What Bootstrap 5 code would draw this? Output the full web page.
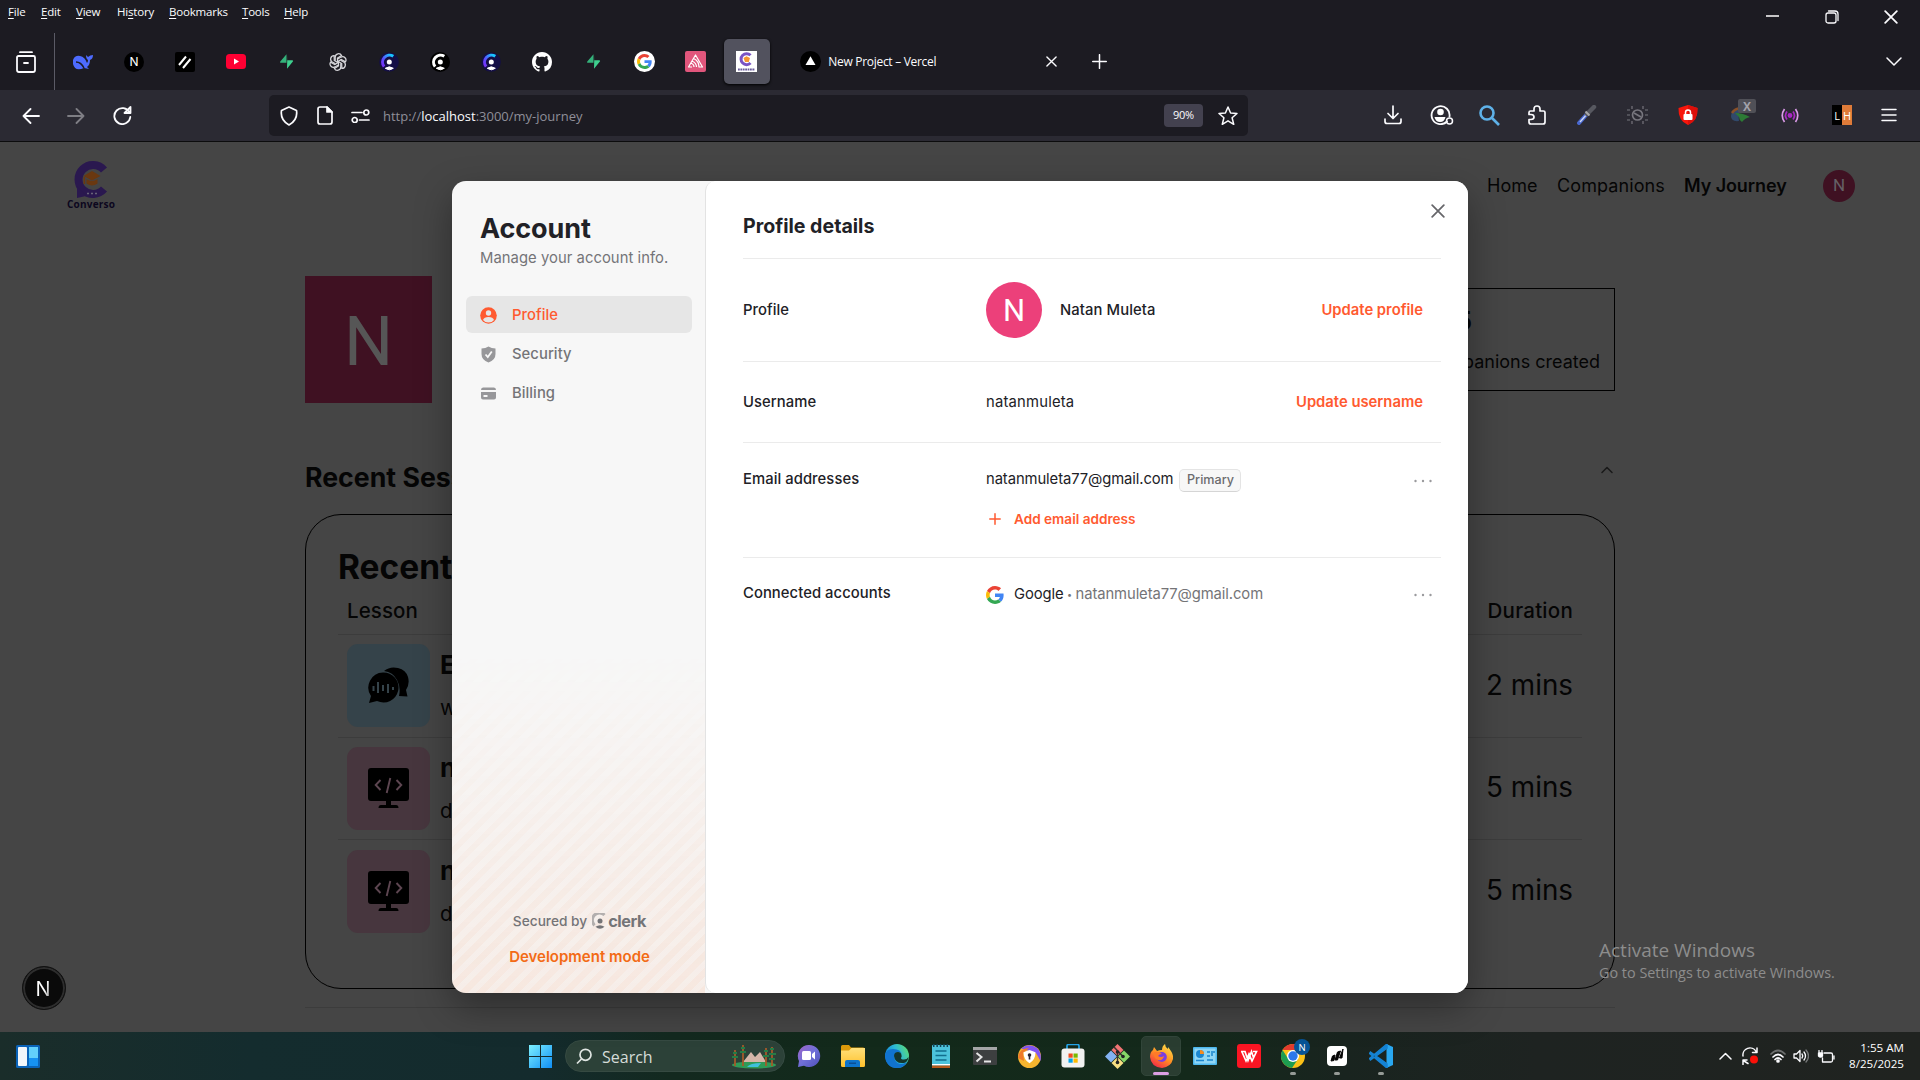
<!DOCTYPE html>
<html lang="en">
<head>
<meta charset="utf-8">
<meta name="viewport" content="width=device-width, initial-scale=1">
<title>Converso – My Journey</title>
<link href="https://cdn.jsdelivr.net/npm/bootstrap@5.3.0/dist/css/bootstrap.min.css" rel="stylesheet">
<style>
  body{width:1920px;height:1080px;overflow:hidden;background:#454545;font-family:"Open Sans","Noto Sans",sans-serif;color:#fbfbfe}
  svg{display:block;flex:none}
  .stroke{fill:none;stroke:currentColor;stroke-width:1.5;stroke-linecap:round;stroke-linejoin:round}
  /* browser chrome */
  .chrome-top{height:90px;background:#1c1b22}
  .menu-row{height:33px;padding:4px 0 0 8px;font-size:11.5px;letter-spacing:-.2px;line-height:16px}
  .menu-row span{white-space:nowrap}
  .menu-row u{text-underline-offset:2px}
  .win-ctl{width:59px;height:33px;margin-top:-4px}
  .tab-row{height:57px}
  .lib-cell{width:55px;margin-right:2px;border-right:1px solid #5b5b66}
  .pin{width:51.1px;height:57px}
  .pin-active span{width:46px;height:45px;border-radius:5px;background:#52525e;box-shadow:0 1px 3px #000}
  .tab-open{width:285px;padding-left:28px;font-size:12px;letter-spacing:-.3px}
  .tool-row{height:52px;background:#2b2a33;border-bottom:1px solid #0c0c0d}
  .url-box{width:979px;height:41px;margin-left:137px;background:#1c1b22;border-radius:5px;font-size:13px;color:#8f8f99}
  .url-box svg{color:#fbfbfe}
  .zoom-pill{width:39px;height:23px;border-radius:4px;background:#43414f;color:#fbfbfe;font-size:11px;letter-spacing:-.3px}
  .ext-grid{display:grid;grid-template-columns:46.5px 49px 49px 49px 50px 51px 52px 51px 51px 49px 20px;margin:-1px 0 0 135px}
  /* page */
  .site{height:890px;font-family:Inter,"Open Sans",sans-serif;color:#050505;overflow:hidden}
  .site-nav{height:87px;padding:0 65px 0 66px}
  .site-nav a{color:#050505;text-decoration:none;font-size:18px;line-height:24px;white-space:nowrap}
  .initial{font-family:Roboto,sans-serif;line-height:1;font-weight:400}
  .user-dot{width:32px;height:32px;border-radius:50%;background:#3f1122;color:#656065;font-size:17px}
  .wrap{width:1310px;margin:0 auto}
  .user-tile{width:127px;height:127px;background:#3f1122;color:#565656;font-size:69px;padding-top:3px}
  .stat{width:220px;height:103px;border:1px solid #000;padding:12px 14px}
  .sess-title{font-size:26.7px;font-weight:700;line-height:32px}
  .sess-card{height:475px;border:1px solid #000;border-radius:36px;padding:31px 32px 0}
  .sess-card h2{font-size:33.5px;font-weight:700;line-height:42px;margin:0}
  .sess-head{height:47px;font-size:20.5px;font-weight:500;padding:1px 9px 0;border-bottom:1px solid #3c3c3c}
  .sess-line{height:102.5px;padding:0 9px;border-bottom:1px solid #3c3c3c}
  .sess-line:last-child{border:0}
  .sess-name{font-size:26px;font-weight:700;line-height:36px;padding-top:1px}
  .sess-topic{font-size:20.5px;line-height:50px;height:42px}
  .sess-time{font-size:27.8px}
  .subj{width:83px;height:83px;border-radius:11px;background:#35434a;color:#000;margin-right:10px}
  .subj.pink{background:#47363e}
  .next-badge{position:absolute;left:22px;top:966px;width:44px;height:44px;border-radius:50%;background:#0a0a0a;border:1px solid #111;box-shadow:inset 0 0 0 2px #2e2e2e;font-family:Inter,sans-serif;font-size:20px;color:#fff;padding:1px 2px 0 0}
  .next-badge span{background:linear-gradient(110deg,#fff 55%,#777 100%);-webkit-background-clip:text;background-clip:text;color:transparent}
  .watermark{position:absolute;left:1599px;top:941px;color:#8d8d8d;line-height:1;white-space:nowrap}
  /* account dialog */
  .acct{position:absolute;left:452px;top:181px;width:1016px;height:812px;border-radius:14px;background:#f7f7f7;color:#212126;overflow:hidden;font-family:Inter,"Open Sans",sans-serif;font-size:14.8px}
  .acct-shadow{position:absolute;left:452px;top:181px;width:1016px;height:812px;border-radius:14px;box-shadow:0 14px 36px rgba(0,0,0,.35)}
  .side{width:253px;position:relative;padding:31px 13px 0 14px}
  .side-foot{position:absolute;left:0;right:0;bottom:0;height:340px;background:repeating-linear-gradient(-45deg,rgba(246,120,50,.12) 0 6px,rgba(246,120,50,.07) 6px 12px);-webkit-mask-image:linear-gradient(transparent,#000);mask-image:linear-gradient(transparent,#000)}
  .side-note{position:absolute;left:0;right:0;bottom:25px;padding-left:2px}
  .muted{color:#747477}
  .side-item{height:37px;margin-bottom:2px;padding:1px 0 0 14px;border-radius:6px;font-weight:500;color:#747477;letter-spacing:.05px}
  .side-item.on{background:#e6e6e6;color:#ff5a30}
  .side-item svg{margin-right:15px}
  .pane{width:763px;background:#fff;border-left:1px solid #e3e3e3;border-radius:10px 0 0 10px;padding:0 27px 0 37px;position:relative}
  .pane-title{height:78px;padding-top:32px;font-size:19.6px;font-weight:700;line-height:26px;border-bottom:1px solid #ebebeb}
  .prow{border-bottom:1px solid #ebebeb}
  .plabel{width:243px;font-weight:500;white-space:nowrap;letter-spacing:.06px}
  .orange{color:#ff5a30;font-weight:600}
  .pill{height:23px;width:62px;border:1px solid #e4e4e4;border-bottom-color:#d5d5d5;border-radius:5px;background:#f7f7f7;color:#6b6b6e;font-size:12.6px;font-weight:500;margin-left:6px}
  .avatar{width:56px;height:56px;border-radius:50%;background:#ec407a;margin-right:18px;font-size:31px;padding-top:1px}
  .mail{letter-spacing:-.09px;white-space:nowrap}
  .dots{color:#9a9a9d}
  .acct-close{position:absolute;right:23px;top:23px}
  /* taskbar */
  .taskbar{height:48px;background:linear-gradient(90deg,#1a2d2a 0,#142c2e 13%,#142b2d 28%,#13291f 35%,#132a1b 45%,#14291b 62%,#19241f 70%,#1e2321 80%,#202320 100%);position:relative}
  .search-pill{width:220px;height:32px;border-radius:16px;background:#2c4138;border:1px solid #364a42;font-size:16px;color:#d5dcd8;padding:0 7px 0 10px}
  .tb{width:44px;height:48px;position:relative}
  .tb.run::after{content:"";position:absolute;bottom:5px;width:6px;height:3px;border-radius:2px;background:#969b97}
  .tb.cur::before{content:"";position:absolute;inset:4px 2px;border-radius:5px;background:#2a3d31;border:1px solid #32463a}
  .tb.cur::after{content:"";position:absolute;bottom:5px;width:16px;height:3px;border-radius:2px;background:#dc9ee3}
  .tb svg{position:relative}
  .clock{font-size:11.6px;line-height:16px;color:#fff;width:69px}
</style>
<script src="https://cdn.jsdelivr.net/npm/bootstrap@5.3.0/dist/js/bootstrap.bundle.min.js"></script>
</head>
<body class="d-flex flex-column">
<svg width="0" height="0" class="position-absolute">
  <defs>
    <linearGradient id="gClerk" x1="0" y1="1" x2=".8" y2="0"><stop offset="0" stop-color="#7b2ff7"/><stop offset=".45" stop-color="#5b4cff"/><stop offset="1" stop-color="#17c6ff"/></linearGradient>
    <linearGradient id="gWin" x1="0" y1="0" x2="1" y2="1"><stop offset="0" stop-color="#7df1ff"/><stop offset="1" stop-color="#0f8ef5"/></linearGradient>
    <linearGradient id="gChat" x1="0" y1="0" x2="1" y2="1"><stop offset="0" stop-color="#a166c8"/><stop offset=".5" stop-color="#6f6fd8"/><stop offset="1" stop-color="#4e4fb8"/></linearGradient>
    <linearGradient id="gFold" x1="0" y1="0" x2="0" y2="1"><stop offset="0" stop-color="#ffe07a"/><stop offset="1" stop-color="#ffc12c"/></linearGradient>
    <linearGradient id="gEdge" x1="0" y1=".6" x2="1" y2=".1"><stop offset="0" stop-color="#1079d6"/><stop offset=".5" stop-color="#2bb8d8"/><stop offset="1" stop-color="#5fe06a"/></linearGradient>
    <linearGradient id="gFox" x1=".8" y1="0" x2=".2" y2="1"><stop offset="0" stop-color="#ffe14a"/><stop offset=".5" stop-color="#ff9023"/><stop offset="1" stop-color="#f2214b"/></linearGradient>
    <symbol id="bolt" viewBox="0 0 20 20"><path d="M11 2v6.400h5.800c.9 0 1.300.9.700 1.600L10.600 18.500z" fill="#3ecf8e"/><path d="M10 18v-6.400H3.400c-.9 0-1.300-.9-.7-1.600L10 1.500z" fill="#34b27b"/></symbol>
    <symbol id="clerkDark" viewBox="0 0 20 20"><circle cx="10" cy="10" r="9.800" fill="#140f46"/><path d="M14.300 4.300A7 7 0 0 0 5.100 14.600" fill="none" stroke="url(#gClerk)" stroke-width="3"/><circle cx="10.300" cy="10" r="2.500" fill="#fff"/><path d="M6.300 16.300q4-3 8 0-4 3-8 0z" fill="#fff" stroke="#fff"/></symbol>
    <symbol id="googleG" viewBox="0 0 48 48"><path fill="#EA4335" d="M24 9.500c3.540 0 6.710 1.220 9.210 3.600l6.850-6.850C35.900 2.380 30.470 0 24 0 14.620 0 6.510 5.380 2.560 13.220l7.980 6.190C12.430 13.720 17.740 9.500 24 9.500z"/><path fill="#4285F4" d="M46.980 24.550c0-1.570-.15-3.090-.38-4.550H24v9.020h12.940c-.58 2.960-2.260 5.480-4.780 7.180l7.730 6c4.510-4.180 7.090-10.360 7.090-17.650z"/><path fill="#FBBC05" d="M10.530 28.590c-.48-1.450-.76-2.990-.76-4.590s.27-3.140.76-4.590l-7.980-6.190C.92 16.460 0 20.120 0 24s.92 7.540 2.560 10.780z"/><path fill="#34A853" d="M24 48c6.480 0 11.930-2.130 15.890-5.810l-7.730-6c-2.150 1.450-4.920 2.300-8.160 2.300-6.260 0-11.570-4.220-13.470-9.910l-7.980 6.190C6.510 42.620 14.620 48 24 48z"/></symbol>
    <symbol id="codeMon" viewBox="0 0 41 41"><rect width="41" height="33" y="0" rx="3"/><path d="M18 32h5v5h5q2.500 0 2.500 3h-20q0-3 2.500-3h5z"/><path d="M12.500 12l-4.800 5 4.800 5M28.500 12l4.800 5-4.800 5M22.300 10l-3.600 15" fill="none" stroke="#5d4651" stroke-width="1.900"/></symbol>
    <symbol id="x" viewBox="0 0 12 12"><path d="M1 1l10 10M11 1L1 11" class="stroke"/></symbol>
  </defs>
</svg>

<header class="chrome-top flex-shrink-0">
  <div class="menu-row d-flex">
    <span style="width:33px"><u>F</u>ile</span><span style="width:35px"><u>E</u>dit</span><span style="width:41px"><u>V</u>iew</span><span style="width:52px">Hi<u>s</u>tory</span><span style="width:73px"><u>B</u>ookmarks</span><span style="width:42px"><u>T</u>ools</span><span><u>H</u>elp</span>
    <div class="d-flex ms-auto">
      <div class="win-ctl d-flex align-items-center justify-content-center"><svg width="13" height="13"><path d="M0 6h13" stroke="#fff" stroke-width="1.500"/></svg></div>
      <div class="win-ctl d-flex align-items-center justify-content-center"><svg width="14" height="14" class="stroke" style="stroke-width:1.300"><rect x="1" y="3" width="10" height="10" rx="2"/><path d="M3.500 1H10q3 0 3 3v6.500"/></svg></div>
      <div class="win-ctl d-flex align-items-center justify-content-center"><svg width="14" height="14"><use href="#x"/></svg></div>
    </div>
  </div>
  <div class="tab-row d-flex align-items-center">
    <div class="lib-cell h-100 d-flex align-items-center ps-3"><svg width="20" height="22" class="stroke" style="stroke-width:1.800" viewBox="0 0 20 22"><path d="M4 1.200h12M1 6.500Q1 5 2.500 5h15Q19 5 19 6.500V19q0 2-2 2H3q-2 0-2-2zM8 12h4"/></svg></div>
    <div class="pin d-flex align-items-center justify-content-center"><svg width="22" height="18" viewBox="0 0 22 18"><path d="M1 7Q3 2 8 3q5 1 7 7 1-1 1-3-2-1-2-5l2 2q2-2 5-2 0 4-3 5 0 5-3 7l2 2-5-1Q3 19 1 11z" fill="#4d6bfe"/><path d="M4 9q5 0 8 6" stroke="#1c1b22" stroke-width="1.500" fill="none"/></svg></div>
    <div class="pin d-flex align-items-center justify-content-center"><svg width="20" height="20"><circle cx="10" cy="10" r="10"/><text x="10" y="14.300" text-anchor="middle" font-family="Inter" font-size="12" fill="#fff">N</text></svg></div>
    <div class="pin d-flex align-items-center justify-content-center"><svg width="20" height="20"><rect width="20" height="20" rx="2"/><path d="M4 13L11 4.500M8 16L15.500 7" stroke="#fff" stroke-width="2"/></svg></div>
    <div class="pin d-flex align-items-center justify-content-center"><svg width="20" height="15"><rect width="20" height="15" rx="3.500" fill="#ff0033"/><path d="M8 4.500v6l5-3z" fill="#fff"/></svg></div>
    <div class="pin d-flex align-items-center justify-content-center"><svg width="17" height="17"><use href="#bolt"/></svg></div>
    <div class="pin d-flex align-items-center justify-content-center"><svg width="18" height="18" viewBox="-9 -9 18 18" fill="none" stroke="#d7d7db" stroke-width="1.250"><g id="petal"><path d="M-2.800-1.300V-5A3.400 3.400 0 0 1 3.600-6.500L-.5-4v5"/></g><use href="#petal" transform="rotate(60)"/><use href="#petal" transform="rotate(120)"/><use href="#petal" transform="rotate(180)"/><use href="#petal" transform="rotate(240)"/><use href="#petal" transform="rotate(300)"/></svg></div>
    <div class="pin d-flex align-items-center justify-content-center"><svg width="20" height="20"><use href="#clerkDark"/></svg></div>
    <div class="pin d-flex align-items-center justify-content-center"><svg width="20" height="20"><circle cx="10" cy="10" r="10"/><path d="M14.300 4.300A7 7 0 0 0 5.100 14.600" fill="none" stroke="#fff" stroke-width="3"/><circle cx="10.300" cy="10" r="2.500" fill="#fff"/><path d="M6.300 16.300q4-3 8 0-4 3-8 0z" fill="#fff" stroke="#fff"/></svg></div>
    <div class="pin d-flex align-items-center justify-content-center"><svg width="20" height="20"><use href="#clerkDark"/></svg></div>
    <div class="pin d-flex align-items-center justify-content-center"><svg width="20" height="20" viewBox="0 0 16 16" fill="#fff"><path d="M8 0C3.580 0 0 3.580 0 8c0 3.540 2.290 6.530 5.470 7.590.4.070.55-.17.55-.38 0-.19-.01-.82-.01-1.490-2.010.37-2.530-.49-2.690-.94-.09-.23-.48-.94-.82-1.130-.28-.15-.68-.52-.01-.53.63-.01 1.080.58 1.230.82.72 1.210 1.870.87 2.330.66.070-.52.280-.87.510-1.070-1.780-.2-3.640-.89-3.640-3.950 0-.87.310-1.590.82-2.150-.08-.2-.36-1.020.08-2.120 0 0 .67-.21 2.200.82.640-.18 1.320-.27 2-.27s1.360.09 2 .27c1.530-1.040 2.200-.82 2.200-.82.440 1.100.16 1.920.08 2.120.51.56.82 1.270.82 2.150 0 3.070-1.870 3.750-3.650 3.950.29.25.54.73.54 1.480 0 1.070-.01 1.930-.01 2.200 0 .21.150.46.550.38A8.010 8.010 0 0 0 16 8c0-4.420-3.580-8-8-8z"/></svg></div>
    <div class="pin d-flex align-items-center justify-content-center"><svg width="17" height="17"><use href="#bolt"/></svg></div>
    <div class="pin d-flex align-items-center justify-content-center"><svg width="21" height="21"><circle cx="10.500" cy="10.500" r="10.500" fill="#fff"/><use href="#googleG" x="3" y="3" width="15" height="15"/></svg></div>
    <div class="pin d-flex align-items-center justify-content-center"><svg width="21" height="21"><rect width="21" height="21" rx="2" fill="#e1567c"/><path d="M7 16H3.500L10.500 4l7 12H14Q14 10 8.500 7.500M11.500 16Q11.500 12 7 10M9 16q0-3-3.500-4" fill="none" stroke="#fff" stroke-width="1.200" stroke-linejoin="round"/></svg></div>
    <div class="pin pin-active d-flex align-items-center justify-content-center"><span class="d-flex align-items-center justify-content-center"><svg width="21" height="21"><rect width="21" height="21" fill="#fff"/><path d="M14.500 4.300A5.500 5.500 0 1 0 14.500 12" stroke="#7a53c4" stroke-width="3" fill="none"/><path d="M7.500 7l3-1.700L14 7l-1.200 4H9z" fill="#f59432"/><path d="M2 18.500h17" stroke="#6a5c9c" stroke-width="2" stroke-dasharray="1.800 .6"/></svg></span></div>
    <div class="tab-open d-flex align-items-center"><svg width="21" height="21" style="margin-right:7px"><circle cx="10.500" cy="10.500" r="10.500"/><path d="M10.500 5.300l5 8.700h-10z" fill="#fff"/></svg><span>New Project – Vercel</span><svg width="11" height="11" class="ms-auto"><use href="#x"/></svg></div>
    <svg width="15" height="15" class="stroke" style="margin-left:35px"><path d="M7.500.7v13.600M.7 7.500h13.600"/></svg>
    <svg width="16" height="9" class="stroke ms-auto" style="margin-right:18px"><path d="M1 1l7 7 7-7"/></svg>
  </div>
</header>

<div class="tool-row d-flex align-items-center flex-shrink-0">
  <svg width="18" height="16" class="stroke" style="margin-left:22px;stroke-width:1.800"><path d="M17 8H1.500M8.500 1l-7 7 7 7"/></svg>
  <svg width="18" height="16" class="stroke" style="margin-left:27px;stroke-width:1.800;opacity:.4"><path d="M1 8h15.500M9.500 1l7 7-7 7"/></svg>
  <svg width="19" height="19" class="stroke" style="margin-left:28px;stroke-width:1.800"><path d="M16.500 6.500A8 8 0 1 0 17.300 11M17.500 1v6h-6z"/></svg>
  <div class="url-box d-flex align-items-center">
    <svg width="18" height="20" class="stroke" style="margin-left:11px;stroke-width:1.700"><path d="M9 1l7.500 3.500Q18 14 9 19 0 14 1.500 4.500z"/></svg>
    <svg width="16" height="19" class="stroke" style="margin-left:19px;stroke-width:1.700"><path d="M10 1H3Q1 1 1 3v13q0 2 2 2h10q2 0 2-2V6z"/><path d="M10 1v5h5z" fill="#fff"/></svg>
    <svg width="19" height="14" class="stroke" style="margin-left:18px;stroke-width:1.700"><path d="M1 3.500h10M8.500 11H18"/><circle cx="15.300" cy="3.500" r="2.500"/><circle cx="3.700" cy="11" r="2.500"/></svg>
    <span style="margin:2px 0 0 13px">http://<span style="color:#fbfbfe">localhost</span>:3000/my-journey</span>
    <span class="zoom-pill d-flex align-items-center justify-content-center ms-auto">90%</span>
    <svg width="20" height="20" class="stroke" style="margin:0 10px 0 15px"><path d="M10 1l2.600 6 6.400.5-4.900 4.200 1.600 6.600L10 14.800l-5.700 3.500 1.600-6.600L1 7.500 7.400 7z"/></svg>
  </div>
  <div class="ext-grid align-items-center">
    <svg width="20" height="20" class="stroke" style="stroke-width:1.700"><path d="M10 1v12M5 8.500l5 5 5-5M2 14v2.500Q2 18.500 4 18.500h12q2 0 2-2V14"/></svg>
    <svg width="24" height="20" viewBox="0 0 24 20"><path d="M17 16.500a9 9 0 1 1 2.500-5" class="stroke" style="stroke-width:1.800"/><circle cx="10.500" cy="7" r="3.300" fill="#fff"/><path d="M4.500 12h11q-1 5-5.500 5t-5.500-5z" fill="#fff"/><circle cx="19.500" cy="16" r="3" class="stroke"/></svg>
    <svg width="21" height="21" fill="none" stroke="#5eb1e8" stroke-width="2.600"><circle cx="8" cy="8" r="6.500"/><path d="M13 13l7 7"/></svg>
    <svg width="18" height="20" class="stroke" style="stroke-width:1.700"><path d="M1 7.500q0-1.500 1.500-1.500H6V4q0-3 3-3t3 3v2h3.500Q17 6 17 7.500V17q0 2-2 2H3q-2 0-2-2v-2.500h2q3 0 3-2.500T3 9.500H1z"/></svg>
    <svg width="20" height="20" viewBox="0 0 20 20"><path d="M2 18L10 9" stroke="#4968d0" stroke-width="4" stroke-linecap="round"/><path d="M3 17L10 9" stroke="#cfd8f4" stroke-width="1.300"/><path d="M10 9l7-7" stroke="#575860" stroke-width="4.500" stroke-linecap="round"/><path d="M8.500 6.500l4 4" stroke="#aaa" stroke-width="2"/></svg>
    <svg width="21" height="20" viewBox="0 0 21 20" fill="none" stroke="#77767e" stroke-width="1.700"><circle cx="10.500" cy="10" r="5"/><path d="M7 8l7 4"/><path d="M5 1v3M16 1v3M5 16v3M16 16v3M0 5h3M0 10h3M0 15h3M18 5h3M18 10h3M18 15h3" stroke-width="1.200"/></svg>
    <svg width="20" height="20"><path d="M10 0l9.500 3Q20 16 10 20 0 16 .5 3z" fill="#f8160c"/><path d="M10 0l9.500 3Q20 16 10 20z" fill="#dc0f0a"/><rect x="5.500" y="9" width="9" height="6" rx="1" fill="#fff"/><path d="M7.500 9V7.500a2.500 2.500 0 0 1 5 0V9" stroke="#fff" stroke-width="1.500" fill="none"/></svg>
    <svg width="27" height="28" viewBox="0 0 27 28" style="margin-top:-8px"><path d="M1 19q1-8 10-8-3 6-2 13-8 1-8-5z" fill="#31496b"/><path d="M2 16q4-6 11-4" stroke="#8a5028" stroke-width="2.500" fill="none"/><path d="M5 16q8 0 15 4-5 1-8 5-3-2-3-5z" fill="#2c7a35"/><rect x="8" y="2" width="18" height="14" rx="2" fill="#505057"/><text x="17" y="13.500" text-anchor="middle" font-size="12" font-weight="700" fill="#a3a3aa">X</text></svg>
    <svg width="18" height="15" viewBox="0 0 18 15" fill="none" stroke="#a92ac4" stroke-width="1.700"><circle cx="9" cy="7.500" r="1.600" fill="#a92ac4"/><path d="M6 3.500q-3 4 0 8M12 3.500q3 4 0 8"/><path d="M3.500 1q-4.500 6.500 0 13M14.500 1q4.500 6.500 0 13" stroke="#db9ae8"/></svg>
    <svg width="20" height="20"><rect width="10" height="20"/><rect x="10" width="10" height="20" fill="#df7b39"/><text x="5" y="14.500" text-anchor="middle" font-size="11" fill="#fff">L</text><text x="15" y="14.500" text-anchor="middle" font-size="11" fill="#fff">H</text></svg>
    <svg width="16" height="14" class="stroke"><path d="M1 1.500h14M1 7h14M1 12.500h14"/></svg>
  </div>
</div>

<main class="site flex-shrink-0">
  <nav class="site-nav d-flex align-items-center">
    <svg width="50" height="50" viewBox="0 0 50 50"><path d="M38 9A14.500 14.500 0 1 0 38 28" fill="none" stroke="#2a184f" stroke-width="8"/><path d="M11 25v12l9-2z" fill="#2a184f"/><path d="M17.500 15l8.500-5 8.500 5-8.500 4.500zM20.500 18q5.500 4 11 0v4.500q-5.500 4-11 0z" fill="#6a3810"/><path d="M18.300 16v7" stroke="#6a3810" stroke-width="1.500"/><path d="M21 32.500h10" stroke="#696478" stroke-width="1.600" stroke-dasharray="2 2"/><text x="25" y="46.500" text-anchor="middle" font-size="10" font-weight="700" fill="#0c071e" font-family="Open Sans" textLength="48">Converso</text></svg>
    <a href="#" class="ms-auto" style="width:70px">Home</a><a href="#" style="width:127px;letter-spacing:.1px">Companions</a><a href="#" class="fw-semibold" style="width:139px;letter-spacing:-.08px">My Journey</a>
    <span class="user-dot initial d-flex align-items-center justify-content-center">N</span>
  </nav>
  <div class="wrap">
    <section class="d-flex justify-content-between" style="padding-top:47px;height:174px">
      <div class="user-tile initial d-flex align-items-center justify-content-center">N</div>
      <div class="stat d-flex flex-column align-items-end" style="margin-top:12px"><div style="width:144px;font-size:25px;font-weight:700;line-height:40px">5</div><div style="font-size:18px;line-height:42px;white-space:nowrap">Companions created</div></div>
    </section>
    <section class="d-flex justify-content-between align-items-center" style="height:74px;margin-top:37px">
      <div class="sess-title">Recent Sessions</div>
      <svg width="12" height="8" class="stroke" style="margin:-14px 2px 0 0;color:#191919"><path d="M1 6.500l5-5 5 5"/></svg>
    </section>
    <section class="sess-card">
      <h2>Recent Sessions</h2>
      <div class="sess-head d-flex justify-content-between align-items-center"><span style="letter-spacing:.1px">Lesson</span><span style="letter-spacing:.25px">Duration</span></div>
      <div class="sess-line d-flex align-items-center">
        <div class="subj d-flex align-items-center justify-content-center"><svg width="41" height="37" viewBox="0 0 41 37"><path d="M16 4Q22-1 30 1q8 2 10 9 2 7-2 13l1.500 6.500L31 29q2-9-2-16-4-8-13-9z"/><path d="M15 5.500A15 15 0 1 1 9 34l-8 2 2-7A15 15 0 0 1 15 5.500z"/><path d="M5.500 19v5M10 15v11M15 18v6M20 17v9M25 20v3" stroke="#35434a" stroke-width="2"/></svg></div>
        <div><div class="sess-name">English</div><div class="sess-topic">words</div></div>
        <span class="sess-time ms-auto">2 mins</span>
      </div>
      <div class="sess-line d-flex align-items-center">
        <div class="subj pink d-flex align-items-center justify-content-center"><svg width="41" height="41"><use href="#codeMon"/></svg></div>
        <div><div class="sess-name">neura</div><div class="sess-topic">data</div></div>
        <span class="sess-time ms-auto">5 mins</span>
      </div>
      <div class="sess-line d-flex align-items-center">
        <div class="subj pink d-flex align-items-center justify-content-center"><svg width="41" height="41"><use href="#codeMon"/></svg></div>
        <div><div class="sess-name">neura</div><div class="sess-topic">data</div></div>
        <span class="sess-time ms-auto">5 mins</span>
      </div>
    </section>
    <div style="height:1px;background:#3c3c3c;margin-top:18px"></div>
  </div>
</main>

<footer class="taskbar d-flex align-items-center flex-shrink-0">
  <svg width="24" height="23" style="margin-left:16px"><rect width="24" height="23" rx="1.500" fill="#0a63b8"/><rect x="2" y="2" width="9" height="19" rx="1" fill="#f2f6fa"/><rect x="13" y="2" width="9" height="11" fill="#63d0fb"/><rect x="13" y="13" width="9" height="8" fill="#1692f2"/></svg>
  <svg width="23" height="23" style="margin-left:489px" fill="url(#gWin)"><path d="M0 0h11v11H0zM12 0h11v11H12zM0 12h11v11H0zM12 12h11v11H12z"/></svg>
  <div class="search-pill d-flex align-items-center" style="margin-left:13px">
    <svg width="17" height="17" fill="none" stroke="#dfe5e2" stroke-width="1.700"><circle cx="9.500" cy="6.800" r="5.500"/><path d="M5.500 11l-4.500 4.500"/></svg><span style="margin:1px 0 0 9px">Search</span>
    <svg width="46" height="26" viewBox="0 0 46 26" class="ms-auto"><ellipse cx="23" cy="22" rx="22" ry="3.500" fill="#2f9a57"/><path d="M12 19l8-10 4 5 5-5 6 10z" fill="#d5b5a8"/><path d="M16 24q3-4 14-4l-3 4z" fill="#3fc0dc"/><path d="M4 23V7M12 23V2M35 23V5M41 23V4" stroke="#a45a2a" stroke-width="1.800"/><path d="M2 10h4M1 14h6M10 5h4M9 9h6M33 8h4M32 13h6M39 6h4M38 11h7M38 16h6" stroke="#267b45" stroke-width="2"/></svg>
  </div>
  <div class="d-flex" style="margin-left:2px">
    <div class="tb d-flex align-items-center justify-content-center"><svg width="24" height="24"><path d="M12 1a11 11 0 1 1-5 20.700L1 23l1-6A11 11 0 0 1 12 1z" fill="url(#gChat)"/><rect x="5" y="7" width="9" height="9" rx="1.500" fill="#fff"/><path d="M15 10l3-2.500v8L15 13z" fill="#fff"/></svg></div>
    <div class="tb d-flex align-items-center justify-content-center"><svg width="24" height="22"><path d="M0 1.500Q0 0 1.500 0H8l2 2.500h12q2 0 2 2V7H0z" fill="#dc9a0b"/><path d="M0 5.500h8L10.500 3H24v17.500q0 1.500-1.500 1.500h-21Q0 22 0 20.500z" fill="url(#gFold)"/><path d="M4 22v-5q0-2 2-2h11q2 0 2 2v5z" fill="#0e74cb"/><path d="M8 17.500h7v1.500H8z" fill="#0a4f96"/></svg></div>
    <div class="tb d-flex align-items-center justify-content-center"><svg width="24" height="24"><circle cx="12" cy="12" r="12" fill="url(#gEdge)"/><path d="M0 11q1-6 8-6 8 0 9 6-1-3-4-3-4 0-4 5 1 6 6 7 3 .5 7-2-3 6-10 6Q1 24 0 11z" fill="#1173cf"/><path d="M9 12q0-4 4-4 3 0 3.500 3 .5 2-.5 3 0 1.500 3 1.500t4.500-2.500Q23 18 19 19q-9 1-10-7z" fill="#14352c"/></svg></div>
    <div class="tb d-flex align-items-center justify-content-center"><svg width="18" height="24"><rect y="1" width="18" height="22" rx="1" fill="#4cc3dc"/><path d="M0 20h18v1.500H0z" fill="#fff"/><path d="M0 21.500h18V24H0z" fill="#b4591b"/><path d="M3.500 7h11M3.500 11.500h11M3.500 16h11" stroke="#116e8d" stroke-width="1.700"/><path d="M1 1.500h16" stroke="#14475a" stroke-width="3" stroke-dasharray="1.500 1.900"/></svg></div>
    <div class="tb d-flex align-items-center justify-content-center"><svg width="24" height="18"><rect width="24" height="18" rx="1" fill="#3d3f40"/><path d="M0 0h24v3H0z" fill="#a4a6a7"/><path d="M3.500 6l5 4-5 4.500M11 14.500h7" stroke="#e6e6e6" stroke-width="2" fill="none"/></svg></div>
    <div class="tb d-flex align-items-center justify-content-center"><svg width="23" height="23"><circle cx="11.500" cy="11.500" r="11.500" fill="#f5b52f"/><path d="M3 3.500q8-6 16-.5 5 5 3.500 13L18 8z" fill="#8054f2"/><path d="M0 13Q1 3 11 3L5 8l1 8z" fill="#ee7a2b"/><path d="M11.500 5l6 2.300q0 7.500-6 11-6-3.500-6-11z" fill="#fff"/><circle cx="11.500" cy="10" r="1.800" fill="#272536"/><path d="M10.700 10h1.600v4.500h-1.600z" fill="#272536"/></svg></div>
    <div class="tb d-flex align-items-center justify-content-center"><svg width="24" height="24"><path d="M6 6V2q0-1.500 1.500-1.500h9Q18 .5 18 2v4" fill="none" stroke="#24a4e8" stroke-width="1.700"/><rect x=".5" y="4.500" width="23" height="19" rx="3" fill="#f1f1f1"/><path d="M7.500 9.500h4.200v4.200H7.500z" fill="#f04c20"/><path d="M12.500 9.500h4.200v4.200h-4.200z" fill="#7ab800"/><path d="M7.500 14.500h4.200v4.200H7.500z" fill="#00a2ea"/><path d="M12.500 14.500h4.200v4.200h-4.200z" fill="#fdb900"/></svg></div>
    <div class="tb d-flex align-items-center justify-content-center"><svg width="25" height="25" viewBox="0 0 25 25"><path d="M12.500 0l6 6-6 6-6-6z" fill="#f17474"/><path d="M6 6.500l6 6-6 6-6-6z" fill="#83b2f2"/><path d="M19 6.500l6 6-6 6-6-6z" fill="#86d668"/><path d="M12.500 13l6 6-6 6-6-6z" fill="#f7df83"/><path d="M9 3l9 9.500M12.500 7v12" stroke="#37332e" stroke-width="1.500"/><circle cx="12.500" cy="8" r="1.800" fill="#222"/><circle cx="18" cy="12.500" r="1.800" fill="#222"/><circle cx="12.500" cy="18.500" r="1.800" fill="#222"/></svg></div>
    <div class="tb cur d-flex align-items-center justify-content-center"><svg width="23" height="24" viewBox="0 0 23 24"><path d="M3 6l1-3 3 4q2-1 5-1 0-4 3-6 0 3 3 5V3q6 7 5 12-2 8-11 9Q1 23 0 13 0 8 3 6z" fill="url(#gFox)"/><circle cx="11.800" cy="13" r="5" fill="#7a3de0"/><path d="M4 8q5-1 8 2-3 0-4 2 3 2 6 0-1 5-6 4-5-2-4-8z" fill="#ff7a28"/></svg></div>
    <div class="tb d-flex align-items-center justify-content-center"><svg width="24" height="18"><rect width="24" height="18" rx="1" fill="#4db8ee"/><rect x="1.500" y="1.500" width="21" height="15" fill="#8fd6f6"/><circle cx="7" cy="7" r="4" fill="#1b86d0"/><path d="M7 7V3a4 4 0 0 1 4 4z" fill="#f68b1f"/><path d="M3 13.500h8M14 5h3M14 9h3M14 13h6M19 4v5M20 5h2" stroke="#1b86d0" stroke-width="1.500"/></svg></div>
    <div class="tb d-flex align-items-center justify-content-center"><svg width="24" height="24"><rect width="24" height="24" rx="3" fill="#fb1523"/><path d="M4 7.500h4l3 9 3.500-9 2 6M5 8l4 9 3-7 3 7 4.500-9.500H16" stroke="#fff" stroke-width="1.700" fill="none"/></svg></div>
    <div class="tb run d-flex align-items-center justify-content-center"><svg width="30" height="30" viewBox="0 0 30 30" style="margin:-6px 0 0 6px"><circle cx="12" cy="18" r="12" fill="#fbc117"/><path d="M1.600 12A12 12 0 0 1 22.400 12H12z" fill="#e33b2e"/><path d="M1.600 12A12 12 0 0 0 11 30l6-9-11-2z" fill="#1d9d50"/><circle cx="12" cy="18" r="6" fill="#fff"/><circle cx="12" cy="18" r="4.700" fill="#2b78ea"/><circle cx="21" cy="9" r="8" fill="#075396"/><text x="21" y="12.500" text-anchor="middle" font-size="9.500" fill="#fff">N</text></svg></div>
    <div class="tb run d-flex align-items-center justify-content-center"><svg width="20" height="20"><rect width="20" height="20" rx="4" fill="#fff"/><path d="M4 15l1.500-5L8 9l-1 5.500zM8 14l2.500-8 3-1-3 9zM12.500 12L16 3l-1 9z" fill="#050505" stroke="#050505"/></svg></div>
    <div class="tb run d-flex align-items-center justify-content-center"><svg width="24" height="24" viewBox="0 0 24 24"><path d="M17.500 0L24 3v18l-6.500 3z" fill="#29a7f0"/><path d="M1.500 8L18 20v4L.5 9.500zM1.500 16L18 4V0L.5 14.500z" fill="#1583d4" stroke="#1583d4" stroke-width="1.500"/></svg></div>
  </div>
  <div class="d-flex align-items-center ms-auto" style="margin-right:16px">
    <svg width="13" height="8" class="stroke"><path d="M1 7l5.500-5.500L12 7"/></svg>
    <svg width="18" height="18" class="stroke" style="margin-left:9px"><path d="M2 9A7 7 0 0 1 15 4.500M16 1v4.500h-4.500M7 16.500L3 14M2 17.500V13h4"/><circle cx="13" cy="12.500" r="4" fill="#fb1008" stroke="none"/></svg>
    <svg width="16" height="14" class="stroke" style="margin-left:11px;stroke-width:1.700"><path d="M1 5q7-7 14 0" opacity=".35"/><path d="M3 8q5-5 10 0M5 10.500q3-3 6 0"/><circle cx="8" cy="12" r="1" fill="#fff"/></svg>
    <svg width="16" height="14" class="stroke" style="margin-left:7px;stroke-width:1.300"><path d="M1 5h2.500L7 1.500v11L3.500 9H1zM9 5q1.500 2 0 4M11 3q3 4 0 8"/><path d="M13 1q5 6 0 12" opacity=".4"/></svg>
    <svg width="18" height="13" class="stroke" style="margin-left:8px;stroke-width:1.300"><path d="M7 3h7q1.500 0 1.500 1.500v6Q15.500 12 14 12H5.500V8M17 6v3"/><path d="M1.500 3h4v3q-2 2-4 0zM2 .5V3M5 .5V3" fill="#fff"/></svg>
    <div class="clock text-end"><div>1:55 AM</div><div>8/25/2025</div></div>
  </div>
</footer>

<div class="next-badge d-flex align-items-center justify-content-center"><span>N</span></div>
<div class="acct-shadow"></div>
<div class="acct d-flex">
  <aside class="side flex-shrink-0">
    <div class="side-foot"></div>
    <div style="padding-left:14px"><div style="font-size:27px;font-weight:700;line-height:34px;letter-spacing:-.1px">Account</div><div class="muted" style="line-height:24px;white-space:nowrap;letter-spacing:.05px">Manage your account info.</div></div>
    <div style="margin-top:26px">
      <div class="side-item on d-flex align-items-center"><svg width="17" height="17"><circle cx="8.500" cy="8.500" r="8.300" fill="#ff5a30"/><circle cx="8.500" cy="6" r="2.700" fill="#e6e6e6"/><path d="M3 13q1-3 5.500-3t5.500 3q-2 2.500-5.500 2.500T3 13z" fill="#e6e6e6"/></svg>Profile</div>
      <div class="side-item d-flex align-items-center"><svg width="17" height="17"><path d="M8.500.5q3 2 7 2V8q0 6-7 8.500Q1.500 14 1.500 8V2.500q4 0 7-2z" fill="#97979a"/><path d="M5.500 8.500l2.300 2.500 4-5.500" stroke="#f7f7f7" stroke-width="1.800" fill="none"/></svg>Security</div>
      <div class="side-item d-flex align-items-center"><svg width="17" height="13"><path d="M1 3Q1 .5 3 .5h11q2 0 2 2.500zM1 5h15v5.500q0 2-2 2H3q-2 0-2-2z" fill="#97979a"/><path d="M3.500 8h4v2h-4z" fill="#f7f7f7"/></svg>Billing</div>
    </div>
    <div class="side-note d-flex flex-column align-items-center">
      <div class="d-flex align-items-center muted" style="font-size:13.700px;line-height:20px;margin-bottom:15px;font-weight:500">Secured by<svg width="14" height="16" viewBox="0 0 14 16" style="margin:1px 2px 0 5px"><path d="M12.500 2A7 7 0 0 0 2.500 12.300" fill="none" stroke="#b3afae" stroke-width="3"/><circle cx="8" cy="8" r="2.500" fill="#747477"/><path d="M3.500 13.800Q8 10.500 12.500 13.800 8 17.500 3.500 13.800z" fill="#747477"/></svg><span style="font-size:16.300px;font-weight:700;letter-spacing:-.4px;padding-top:1px">clerk</span></div>
      <div style="color:#f36b16;font-weight:600;font-size:15px;line-height:22px">Development mode</div>
    </div>
  </aside>
  <section class="pane">
    <svg class="acct-close" width="14" height="14" style="color:#66666a"><use href="#x"/></svg>
    <div class="pane-title">Profile details</div>
    <div class="prow d-flex align-items-center" style="height:103px"><span class="plabel">Profile</span><span class="avatar initial d-flex align-items-center justify-content-center text-white">N</span><span style="font-weight:500;letter-spacing:.1px">Natan Muleta</span><span class="orange ms-auto" style="margin-right:18px">Update profile</span></div>
    <div class="prow d-flex align-items-center" style="height:81px"><span class="plabel">Username</span><span style="letter-spacing:.2px">natanmuleta</span><span class="orange ms-auto" style="margin-right:18px">Update username</span></div>
    <div class="prow d-flex" style="height:115px;padding-top:25px"><span class="plabel">Email addresses</span>
      <div><div class="d-flex" style="height:23px"><span class="mail">natanmuleta77@gmail.com</span><span class="pill d-flex align-items-center justify-content-center" style="margin-top:1px">Primary</span></div>
      <div class="orange d-flex align-items-center" style="margin-top:17px;height:22px;font-size:13.600px"><svg width="12" height="12" class="stroke" style="margin:0 13px 0 3px"><path d="M6 .8v10.400M.8 6h10.400"/></svg>Add email address</div></div>
      <svg class="dots ms-auto" width="18" height="4" style="margin:11px 9px 0 0" fill="currentColor"><circle cx="1.500" cy="2" r="1.200"/><circle cx="9" cy="2" r="1.200"/><circle cx="16.500" cy="2" r="1.200"/></svg>
    </div>
    <div class="d-flex" style="padding-top:24px"><span class="plabel">Connected accounts</span>
      <div class="d-flex align-items-center" style="height:25px"><svg width="18" height="18" style="margin-right:10px"><use href="#googleG"/></svg><span class="mail">Google</span><span class="muted" style="font-size:9px;width:12px;text-align:center">•</span><span class="mail muted">natanmuleta77@gmail.com</span></div>
      <svg class="dots ms-auto" width="18" height="4" style="margin:11px 9px 0 0" fill="currentColor"><circle cx="1.500" cy="2" r="1.200"/><circle cx="9" cy="2" r="1.200"/><circle cx="16.500" cy="2" r="1.200"/></svg>
    </div>
  </section>
</div>
<div class="watermark"><div style="font-size:19px">Activate Windows</div><div style="font-size:14.400px;margin-top:6px">Go to Settings to activate Windows.</div></div>
</body>
</html>
